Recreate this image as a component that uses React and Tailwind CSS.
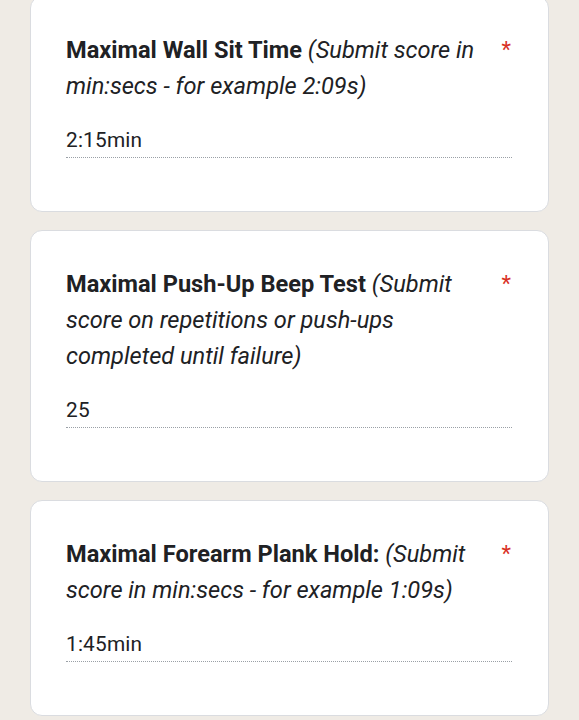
import React from 'react';

const questions = [
  {
    title: 'Maximal Wall Sit Time',
    hint: '(Submit score in min:secs - for example 2:09s)',
    value: '2:15min',
  },
  {
    title: 'Maximal Push-Up Beep Test',
    hint: '(Submit score on repetitions or push-ups completed until failure)',
    value: '25',
  },
  {
    title: 'Maximal Forearm Plank Hold:',
    hint: '(Submit score in min:secs - for example 1:09s)',
    value: '1:45min',
  },
];

const QuestionCard = ({ q }) => (
  <div className="rounded-[12px] border border-[#dadce0] bg-white pl-[35px] pr-[36px] pt-[35px] pb-[53px]">
    <div className="flex items-start">
      <div className="w-[427px] text-[23.6px] leading-[36px] text-[#202124]">
        <span className="font-bold">{q.title}</span>{' '}
        <span className="italic">{q.hint}</span>
      </div>
      <span className="ml-auto pr-[1px] text-[22px] leading-[36px] text-[#d93025]">*</span>
    </div>
    <div className="mt-[22px] border-b border-dotted border-[#9aa0a6] pb-[3px] text-[20.8px] leading-[28px] tracking-[0.2px] text-[#202124]">
      {q.value}
    </div>
  </div>
);

const App = () => {
  return (
    <div className="min-h-screen overflow-hidden bg-[#efebe5] px-[30px] font-['Roboto',sans-serif]">
      <div className="-mt-[4px] flex flex-col gap-[18px]">
        {questions.map((q) => (
          <QuestionCard key={q.title} q={q} />
        ))}
      </div>
    </div>
  );
};

export default App;
